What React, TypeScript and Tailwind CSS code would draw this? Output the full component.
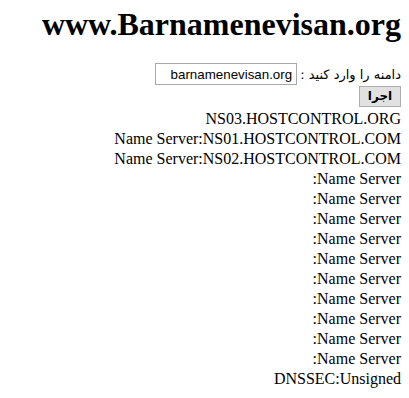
export default function App() {
  const lines: string[] = [
    "NS03.HOSTCONTROL.ORG",
    "Name Server:NS01.HOSTCONTROL.COM",
    "Name Server:NS02.HOSTCONTROL.COM",
    ...Array.from({ length: 10 }, () => "Name Server:"),
    "DNSSEC:Unsigned",
  ];
  return (
    <div
      dir="rtl"
      className="w-[409px] h-[398px] bg-white text-black px-[8px] overflow-hidden"
      style={{ fontFamily: '"Liberation Serif", "Times New Roman", serif' }}
    >
      <h1 className="pt-[6px] text-[32px] font-bold leading-[37px]">www.Barnamenevisan.org</h1>
      <div className="mt-[20px] flex items-center h-[22px]">
        <span
          className="text-[13px] leading-[22px] ml-[3px] pt-[1px]"
          style={{ fontFamily: '"DejaVu Sans", "Noto Sans", sans-serif' }}
        >
          دامنه را وارد کنید :
        </span>
        <input
          dir="rtl"
          readOnly
          value="barnamenevisan.org"
          className="w-[142px] h-[22px] border border-[#a9a9a9] bg-white px-[4px] text-[13.33px] text-black outline-none"
          style={{ fontFamily: '"Liberation Sans", Arial, sans-serif' }}
        />
      </div>
      <div className="mt-[1px] flex h-[21px]">
        <button
          className="w-[42px] h-[21px] border border-[#adadad] bg-[#e1e1e1] text-[12px] font-bold leading-[19px] text-black"
          style={{ fontFamily: '"DejaVu Sans", "Noto Sans", sans-serif' }}
        >
          اجرا
        </button>
      </div>
      <div className="mt-[2px] text-[16px] leading-[20px]">
        {lines.map((l, i) => (
          <div key={i}>{l}</div>
        ))}
      </div>
    </div>
  );
}
